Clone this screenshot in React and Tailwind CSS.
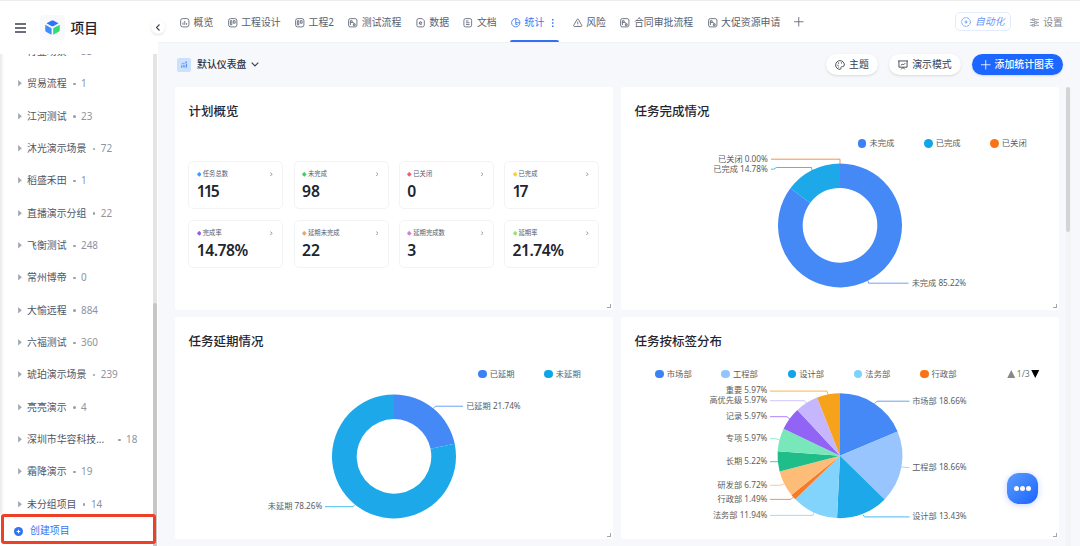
import React from 'react';
import clsx from 'clsx';

const groups = [
  { name: '行业场景', count: 53 },
  { name: '贸易流程', count: 1 },
  { name: '江河测试', count: 23 },
  { name: '沐光演示场景', count: 72 },
  { name: '稻盛禾田', count: 1 },
  { name: '直播演示分组', count: 22 },
  { name: '飞衡测试', count: 248 },
  { name: '常州博帝', count: 0 },
  { name: '大愉远程', count: 884 },
  { name: '六福测试', count: 360 },
  { name: '琥珀演示场景', count: 239 },
  { name: '亮亮演示', count: 4 },
  { name: '深圳市华容科技...', count: 18, wide: true },
  { name: '霜降演示', count: 19 },
  { name: '未分组项目', count: 14 },
];

const tabs = [
  { name: '概览', icon: 'overview' },
  { name: '工程设计', icon: 'board' },
  { name: '工程2', icon: 'board' },
  { name: '测试流程', icon: 'flow' },
  { name: '数据', icon: 'data' },
  { name: '文档', icon: 'doc' },
  { name: '统计', icon: 'pie', active: true },
  { name: '风险', icon: 'risk' },
  { name: '合同审批流程', icon: 'flow' },
  { name: '大促资源申请', icon: 'flow' },
];

const stats = [
  { label: '任务总数', value: '115', color: 'text-[#3b9bff]', tracking: 'tracking-[-2px]' },
  { label: '未完成', value: '98', color: 'text-[#45c768]' },
  { label: '已关闭', value: '0', color: 'text-[#f5586e]' },
  { label: '已完成', value: '17', color: 'text-[#fccf2f]', tracking: 'tracking-[-2px]' },
  { label: '完成率', value: '14.78%', color: 'text-[#965ee5]', tracking: 'tracking-[-0.5px]' },
  { label: '延期未完成', value: '22', color: 'text-[#eba36b]' },
  { label: '延期完成数', value: '3', color: 'text-[#db7bd0]' },
  { label: '延期率', value: '21.74%', color: 'text-[#9fdf72]', tracking: 'tracking-[-0.5px]' },
];

const completion = [
  { name: '未完成', value: 85.22, color: '#4589f7', line: '247,194 247.5,196.5 287.5,196.5', x: 290.7, y: 196 },
  { name: '已完成', value: 14.78, color: '#1ca8e9', line: '150,82.5 152.5,82.5 155.5,80.8 190.5,80.8 191,84', x: 146.8, y: 82.1 },
  { name: '已关闭', value: 0, color: '#f97316', line: '150,72.5 219,72.5 219,77', x: 146.8, y: 72.1 },
];

const delay = [
  { name: '已延期', value: 21.74, color: '#4589f7', line: '258,91 260.5,88.5 288,88.5', x: 291.2, y: 88 },
  { name: '未延期', value: 78.26, color: '#1ca8e9', line: '150,189 178,189 180,187', x: 147.3, y: 188.3 },
];

const tags = [
  { name: '市场部', value: 18.66, color: '#4589f7', line: '253.5,86 256,83.5 288.5,83.5', x: 291.2, y: 83 },
  { name: '工程部', value: 18.66, color: '#98c5fd', line: '280.5,149.3 288.5,150', x: 291.2, y: 149.6 },
  { name: '设计部', value: 13.43, color: '#1ca8e9', line: '242,197 243.5,199.2 288.5,199.2', x: 291.2, y: 198.6 },
  { name: '法务部', value: 11.94, color: '#83d4fd', line: '149,197.7 192,197.7 193,195', x: 146.4, y: 197 },
  { name: '行政部', value: 1.49, color: '#f97a22', line: '149,181.7 170,181.7 172.5,179', x: 146.4, y: 181 },
  { name: '研发部', value: 6.72, color: '#fdbd78', line: '149,167.6 159,167.6 163,166.3', x: 146.4, y: 167 },
  { name: '长期', value: 5.22, color: '#1fbd89', line: '149,144 157,144', x: 146.4, y: 143.5 },
  { name: '专项', value: 5.97, color: '#78e8ba', line: '149,121 155,121 158.5,122.3', x: 146.4, y: 120.7 },
  { name: '记录', value: 5.97, color: '#9264f6', line: '149,99 166,99 169,101.5', x: 146.4, y: 98.7 },
  { name: '高优先级', value: 5.97, color: '#c5b6fd', line: '149,83 183.5,83 186,86', x: 146.4, y: 82.7 },
  { name: '重要', value: 5.97, color: '#f6a31b', line: '149,73.4 206,73.4 207,76.5', x: 146.4, y: 72.7 },
];

const Icon = ({ name, className }) => {
  const shapes = {
    overview: <><rect x="1" y="1" width="14" height="14" rx="3.5" /><path d="M5 7.5v4M8 5v6.5M11 8.5v3" /></>,
    board: <><rect x="1" y="1" width="14" height="14" rx="3.5" /><path d="M4 4.5h2.4v7H4zM9 4.5h3v4.3H9z" /></>,
    flow: <><rect x="1" y="1" width="14" height="14" rx="3" /><path d="M4 12V4.5h3v3H4M7 7.5c2 0 3.5.5 3.5 2.5M9 10h3v2.5H9z" /></>,
    data: <><path d="M4 1h6.5L14 4.5V12a3 3 0 0 1-3 3H4.500a3 3 0 0 1-3-3V4A3 3 0 0 1 4 1z" /><path d="M5.5 8.5h4.5c0-3-4.500-3-4.500 0s3 3 4.300 1.800" /></>,
    doc: <><rect x="1.5" y="1" width="13" height="14" rx="3" /><path d="M5 5h4M5 8h6M5 11h6" /></>,
    pie: <><circle cx="8" cy="8" r="7" /><path d="M8 1v7h7M8 8v3h3" /></>,
    risk: <><path d="M6.900 2.300a1.300 1.300 0 0 1 2.200 0l5.800 10.200a1.200 1.200 0 0 1-1.100 1.800H2.200a1.200 1.200 0 0 1-1.100-1.800z" /><path d="M8 6v4M8 11.300v1" /></>,
    plus: <path d="M8 0v16M0 8h16" />,
    auto: <><circle cx="8" cy="8" r="7" strokeDasharray="4.2 1.3" /><path d="M8 5.5v5M5.500 8h5" /></>,
    settings: <path d="M0 3h4M8 3h8M4 1.5h4v3H4zM0 8h8M12 8h4M8 6.5h4v3H8zM0 13h4M8 13h8M4 11.5h4v3H4z" />,
    palette: <><path d="M8 1a7 7 0 1 0 0 14c2 0 1-2.500 1.500-3.500C10 10 15 11.500 15 8a7 7 0 0 0-7-7z" /><path d="M4 8.500h1.500M5 5h1.500M9.500 4.500H11M5.500 11.500h1" strokeWidth="2" /></>,
    present: <><path d="M0 1.500h16M1.500 1.500v10h13v-10M5 15l3-3 3 3" /><path d="M4.500 8.500l2.500-2 1.500 1.500 3-3" /></>,
    dash: <><path d="M3 13V9.500M6.300 13V7.500M9.600 13V8.500M13 13V6" strokeWidth="2" /><path d="M2.500 6.500L6 4l3 1.500L13 2M10 2h3v3" /></>,
  };
  return (
    <svg viewBox="0 0 16 16" fill="none" stroke="currentColor" strokeWidth="1.4" className={clsx('shrink-0 overflow-visible', className)}>
      {shapes[name]}
    </svg>
  );
};

const Logo = () => (
  <svg viewBox="0 0 30 30" className="w-[15px] h-[15px]">
    <path d="M3 6.500L13.500 1.200a3 3 0 0 1 3 0L27 6.500 16.500 12.300a3 3 0 0 1-3 0z" fill="#2f74f8" />
    <path d="M.5 9.500l11 5.800a3 3 0 0 1 1.700 2.700v11.500L2.500 24a4 4 0 0 1-2-3.500z" fill="#3b8efb" />
    <path d="M29.500 9.500L18 15.300a3 3 0 0 0-1.700 2.700v11.500l11-6a4 4 0 0 0 2.200-3.500z" fill="#2edb78" />
  </svg>
);

const Sidebar = () => (
  <aside className="flex flex-col w-[158px] shrink-0 bg-white">
    <div className="flex items-center h-[54px] pl-[15px] pt-px">
      <svg viewBox="0 0 11 10" className="w-[11px] h-[10px]" stroke="#3b4252" strokeWidth="1.3">
        <path d="M0 1h11M0 5h11M0 9h11" />
      </svg>
      <div className="flex items-center justify-center w-[25px] h-[25px] ml-[14px] rounded bg-[#f8f9fb]">
        <Logo />
      </div>
      <h1 className="ml-[5.5px] text-[13.7px] font-medium text-[#1c2230] leading-none">项目</h1>
    </div>
    <div className="flex flex-1 min-h-0">
      <div className="flex flex-col flex-1 min-w-0">
        <ul className="flex-1 min-h-0 overflow-hidden bg-linear-to-r from-[#e9e9e9] to-white to-[4px]">
          <div className="-mt-[18.3px]">
            {groups.map((group) => (
              <li key={group.name} className="flex items-center h-[32.34px] pl-[18px] leading-none">
                <svg viewBox="0 0 4 7" className="w-[4px] h-[6.5px] shrink-0 -mt-px" fill="#a3a8b3">
                  <path d="M0 0l4 3.500-4 3.500z" />
                </svg>
                <span className="ml-[5px] text-[9.9px] text-[#4f5666] whitespace-nowrap">{group.name}</span>
                <span className={clsx('w-[2.5px] h-[2.5px] rounded-full bg-[#969ca9]', group.wide ? 'ml-[14px]' : 'ml-[6.5px]')} />
                <span className="ml-[5.5px] text-[9.9px] text-[#8d93a1]">{group.count}</span>
              </li>
            ))}
          </div>
        </ul>
        <button className="relative z-10 flex items-center h-[30px] w-[154.5px] ml-px mb-[2.5px] pl-[10px] pt-[5px] rounded-[3px] border-3 border-[#ee4027] bg-white text-[#3474f5] leading-none">
          <svg viewBox="0 0 10 10" className="w-[9px] h-[9px]">
            <circle cx="5" cy="5" r="5" fill="#2f74f8" />
            <path d="M5 3v4M3 5h4" stroke="#fff" strokeWidth="1.2" />
          </svg>
          <span className="ml-[7px] text-[9.9px]">创建项目</span>
        </button>
      </div>
      <div className="flex flex-col w-[4px] mr-px bg-[#e4e4e4]">
        <div className="mt-auto h-[243px] rounded-t-sm bg-[#c6c6c6]" />
      </div>
    </div>
  </aside>
);

const TopTabs = () => (
  <header className="flex items-center h-[43px] shrink-0 pl-[22px] pr-[17px] bg-white border-b border-[#f1f2f4] text-[#5a6070] text-[9.9px] leading-none">
    <nav className="flex h-full gap-[14.4px]">
      {tabs.map((tab) => (
        <div key={tab.name} className={clsx('flex flex-col h-full', tab.active && 'text-[#3875f6]')}>
          <div className="flex flex-1 items-center gap-[4px] pt-[3px] whitespace-nowrap">
            <Icon name={tab.icon} className="w-[9.5px] h-[9.5px]" />
            {tab.name}
            {tab.active && (
              <svg viewBox="0 0 2 8" className="w-[2px] h-[8px] mx-[4px]" fill="#3875f6">
                <path d="M0 0h1.500v1.500H0zM0 3.200h1.500v1.500H0zM0 6.400h1.500v1.500H0z" />
              </svg>
            )}
          </div>
          {tab.active && <div className="h-[2.5px] -mt-[2.5px] -mx-[1px] rounded-t-sm bg-[#3370f6]" />}
        </div>
      ))}
      <div className="flex items-center pt-[2px] -ml-px">
        <Icon name="plus" className="w-[9.5px] h-[9.5px]" />
      </div>
    </nav>
    <div className="flex items-center justify-center gap-[4px] w-[56px] h-[19px] ml-auto pt-px rounded-[5px] border border-[#e3ecfe] text-[#6796f5]">
      <Icon name="auto" className="w-[10px] h-[10px]" />
      <span className="italic pt-px">自动化</span>
    </div>
    <div className="flex items-center gap-[4px] ml-[19.5px] pt-[3px] text-[#858b98]">
      <Icon name="settings" className="w-[9px] h-[9px]" />
      设置
    </div>
  </header>
);

const Toolbar = () => (
  <div className="flex items-center h-[43.7px] shrink-0 pl-[19px] pr-[17px] text-[9.9px] text-[#363d4c] leading-none">
    <div className="flex items-center justify-center w-[14px] h-[14px] rounded-[2px] bg-[#cde1fe] text-[#4a8ff8]">
      <Icon name="dash" className="w-[8px] h-[8px]" />
    </div>
    <span className="ml-[6px] font-medium text-[#2a303d]">默认仪表盘</span>
    <svg viewBox="0 0 8 5" className="w-[8px] h-[5px] ml-[5px]" fill="none" stroke="#3b4252" strokeWidth="1.2">
      <path d="M.7.700L4 4 7.300.7" />
    </svg>
    <button className="flex items-center justify-center gap-[4px] w-[52px] h-[21px] ml-auto rounded-full bg-white shadow-sm">
      <Icon name="palette" className="w-[10px] h-[10px]" />
      主题
    </button>
    <button className="flex items-center justify-center gap-[4px] w-[72px] h-[21px] ml-[11px] rounded-full bg-white shadow-sm">
      <Icon name="present" className="w-[10px] h-[10px]" />
      演示模式
    </button>
    <button className="flex items-center justify-center gap-[4px] w-[91px] h-[21px] ml-[11px] rounded-full bg-[#1b67ff] text-white font-medium shadow-sm">
      <Icon name="plus" className="w-[9.5px] h-[9.5px]" />
      添加统计图表
    </button>
  </div>
);

const Card = ({ title, children }) => (
  <section className="relative flex flex-col rounded-[3px] bg-white overflow-hidden">
    <h2 className="h-[49.3px] shrink-0 pl-[13.5px] pt-[18px] text-[12.5px] font-medium text-[#1f2531] leading-[13px]">{title}</h2>
    {children}
    <div className="absolute right-[2px] bottom-[2px] w-[4px] h-[4px] border-r-[1.5px] border-b-[1.5px] border-[#a5a5a5]" />
  </section>
);

const Legend = ({ items, pager }) => (
  <div className={clsx('flex items-center h-[15px] shrink-0 text-[8.3px] text-[#5c5c5c] leading-none', pager ? 'pl-[34.3px]' : 'justify-end pr-[2.5px]')}>
    {items.map((item) => (
      <div key={item.name} className="flex items-center w-[66.2px]">
        <span className="w-[8.5px] h-[8.5px] rounded-full" style={{ background: item.color }} />
        <span className="ml-[3px]">{item.name}</span>
      </div>
    ))}
    {pager && (
      <div className="flex items-center gap-[1.5px] ml-[20.5px]">
        <svg viewBox="0 0 8 8" className="w-[8.5px] h-[8px]" fill="#888"><path d="M4 0l4 8H0z" /></svg>
        <span className="text-[8.6px] text-[#777]">1/3</span>
        <svg viewBox="0 0 8 8" className="w-[8.5px] h-[8px]"><path d="M0 0h8L4 8z" /></svg>
      </div>
    )}
  </div>
);

const PieChart = ({ data, cy = 138.7, radius = 62, inner = 0 }) => {
  const cx = 219;
  const total = data.reduce((sum, d) => sum + d.value, 0);
  const point = (share, r) => {
    const angle = (share / total) * Math.PI * 2;
    return `${cx + r * Math.sin(angle)} ${cy - r * Math.cos(angle)}`;
  };
  let start = 0;

  return (
    <svg viewBox="0 64.3 438 157.4" className="w-[438px] h-[157.4px] shrink-0">
      {data.map((d) => {
        const from = start;
        const to = start + d.value;
        start = to;
        const large = d.value / total > 0.5 ? 1 : 0;
        return (
          <g key={d.name}>
            {d.value > 0 && (
              <path
                fill={d.color}
                d={`M${point(from, radius)}A${radius} ${radius} 0 ${large} 1 ${point(to, radius)}L${point(to, inner)}A${inner} ${inner} 0 ${large} 0 ${point(from, inner)}Z`}
              />
            )}
            <polyline points={d.line} fill="none" stroke={d.color} strokeWidth="0.8" />
            <text x={d.x} y={d.y + 3} fontSize="8.2" fill="#5c5c5c" textAnchor={d.x > cx ? 'start' : 'end'}>
              {d.name} {d.value.toFixed(2)}%
            </text>
          </g>
        );
      })}
    </svg>
  );
};

const legendColors = ['#3b82f6', '#93c5fd', '#0ea5e9', '#7dd3fc', '#f97316'];

export default function App() {
  return (
    <div className="relative flex w-[1080px] h-[546px] overflow-hidden bg-[#f7f8fb] font-['Noto_Sans','Noto_Sans_CJK_SC',sans-serif]">
      <Sidebar />
      <main className="flex flex-col flex-1 min-w-0">
        <TopTabs />
        <Toolbar />
        <div className="flex flex-1 min-h-0">
          <div className="grid grid-cols-[438px_438px] grid-rows-[223.3px_221.7px] gap-x-[8px] gap-y-[7.3px] pl-[17px]">
            <Card title="计划概览">
              <div className="grid grid-cols-4 gap-x-[10.3px] gap-y-[10.5px] pl-[13.3px] pr-[14px] pt-[25px]">
                {stats.map((stat) => (
                  <div key={stat.label} className="h-[48.5px] px-[7.5px] pt-[8px] rounded-[5px] border border-[#f2f3f5]">
                    <div className="flex items-center h-[9px] text-[6.3px] text-[#555c6b] leading-none">
                      <svg viewBox="0 0 4 4" className={clsx('w-[4.5px] h-[4.5px]', stat.color)} fill="currentColor">
                        <path d="M2 0l1 1 1 1-1 1-1 1-1-1-1-1 1-1z" stroke="currentColor" strokeWidth="0.3" />
                      </svg>
                      <span className="ml-[1.5px]">{stat.label}</span>
                      <svg viewBox="0 0 3 5" className="w-[2.5px] h-[4.5px] ml-auto mr-[2px]" fill="none" stroke="#555c6b" strokeWidth="0.8">
                        <path d="M.4.400l2 2.100-2 2.100" />
                      </svg>
                    </div>
                    <div className={clsx('mt-[4px] text-[15.7px] leading-[16px] font-semibold text-[#20252f]', stat.tracking)}>{stat.value}</div>
                  </div>
                ))}
              </div>
            </Card>

            <Card title="任务完成情况">
              <Legend
                items={[
                  { name: '未完成', color: legendColors[0] },
                  { name: '已完成', color: legendColors[2] },
                  { name: '已关闭', color: legendColors[4] },
                ]}
              />
              <PieChart data={completion} inner={37.3} />
            </Card>

            <Card title="任务延期情况">
              <Legend
                items={[
                  { name: '已延期', color: legendColors[0] },
                  { name: '未延期', color: legendColors[2] },
                ]}
              />
              <PieChart data={delay} inner={37.3} />
            </Card>

            <Card title="任务按标签分布">
              <Legend items={tags.slice(0, 5).map((tag, i) => ({ name: tag.name, color: legendColors[i] }))} pager />
              <PieChart data={tags} cy={138} radius={62.5} />
            </Card>
          </div>
          <div className="w-[5px] ml-[7px] bg-[#f3f4f6]">
            <div className="w-[4px] h-[145px] rounded-sm bg-[#d3d4d6]" />
          </div>
        </div>
      </main>

      {/* Collapse handle sits on the sidebar edge */}
      <button className="absolute left-[151px] top-[20px] flex items-center justify-center w-[14px] h-[14px] rounded-full bg-white shadow">
        <svg viewBox="0 0 4 7" className="w-[4px] h-[7px]" fill="none" stroke="#3b4252" strokeWidth="1.1">
          <path d="M3.500.500l-3 3 3 3" />
        </svg>
      </button>

      {/* Chat bubble */}
      <button className="absolute left-[1007px] top-[473px] flex items-center justify-center gap-[1.5px] w-[31px] h-[31px] rounded-[12px] bg-linear-to-br from-[#5b9bfd] to-[#1a62fd] shadow-[0_1px_6px_rgba(50,110,255,0.3)]">
        <span className="w-[4.5px] h-[4.5px] rounded-full bg-white" />
        <span className="w-[4.5px] h-[4.5px] rounded-full bg-white" />
        <span className="w-[4.5px] h-[4.5px] rounded-full bg-white" />
      </button>
      <div className="absolute inset-x-0 top-0 h-px bg-[#ececec]" />
    </div>
  );
}
